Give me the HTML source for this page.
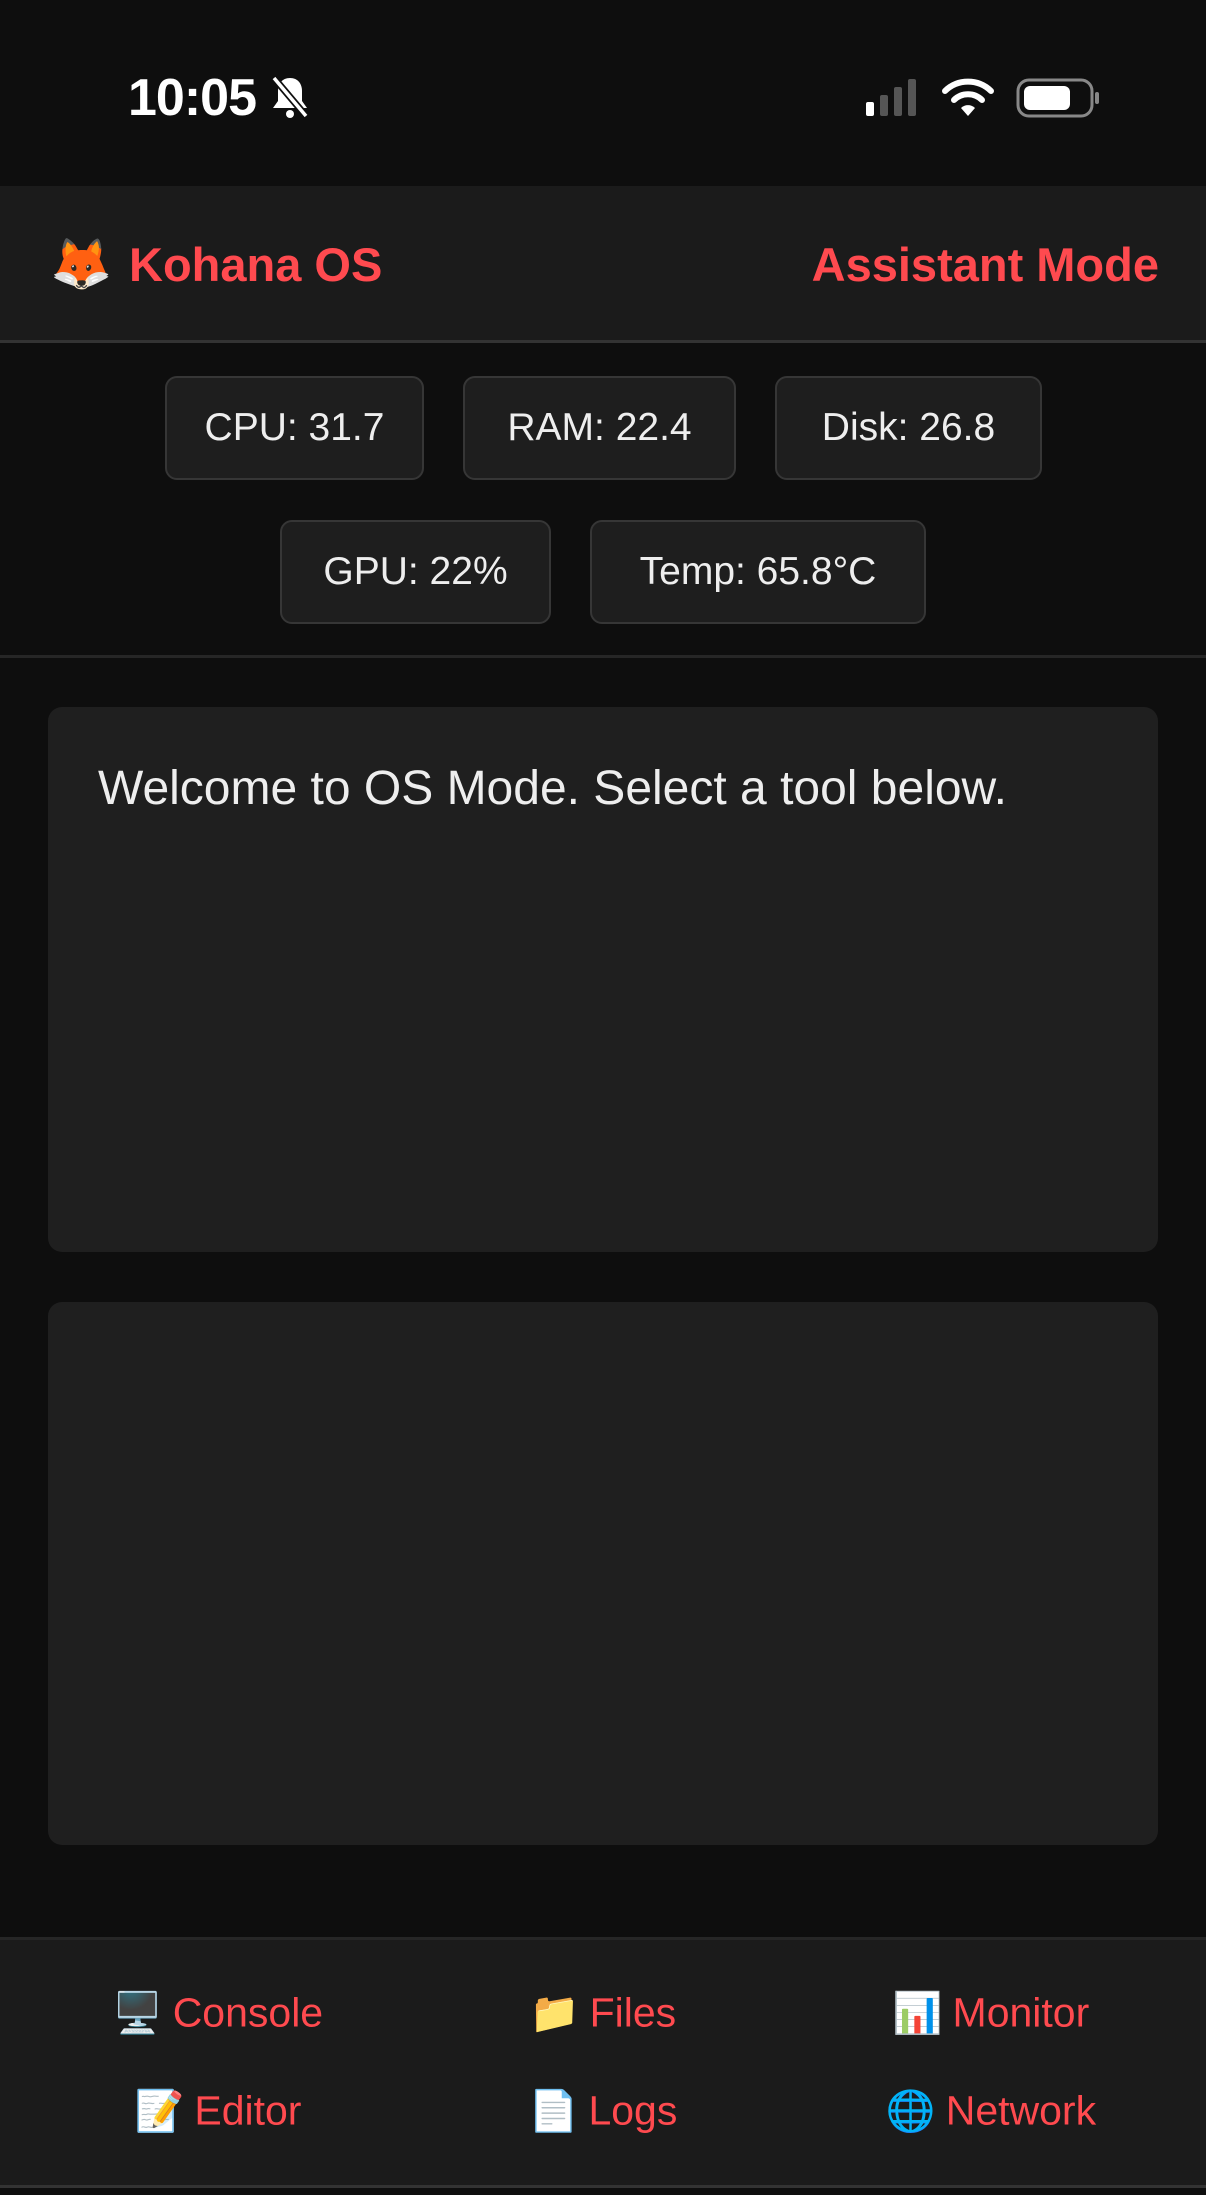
<!DOCTYPE html>
<html><head><meta charset="utf-8"><style>
*{margin:0;padding:0;box-sizing:border-box}
body{width:1206px;height:2195px;background:#0e0e0e;font-family:"Liberation Sans",sans-serif;position:relative;overflow:hidden;color:#eee}
.abs{position:absolute}
.status{left:0;top:0;width:1206px;height:186px;background:#0e0e0e}
.time{left:128px;top:68px;font-size:52px;font-weight:bold;color:#fff;letter-spacing:-1px}
.header{left:0;top:186px;width:1206px;height:157px;background:#1b1b1b;border-bottom:3px solid #333}
.red{color:#ff4a4f}
.chip{position:absolute;height:104px;background:#1e1e1e;border:2px solid #363636;border-radius:12px;font-size:39px;color:#eee;display:flex;align-items:center;justify-content:center}
.box{position:absolute;left:48px;width:1110px;background:#1f1f1f;border-radius:14px}
.nav{left:0;top:1937px;width:1206px;height:251px;background:#1b1b1b;border-top:3px solid #262626;border-bottom:3px solid #333}
.ni{position:absolute;font-size:41px;color:#ff4a4f;display:flex;align-items:center;gap:10px;transform:translate(-50%,-50%);white-space:nowrap}
.ic{font-size:40px;font-family:"Noto Color Emoji","DejaVu Sans",sans-serif}
</style></head><body>
<div class="abs status"></div>
<div class="abs time">10:05</div>
<svg class="abs" style="left:268px;top:74px" width="44" height="46" viewBox="0 0 44 46"><path d="M22 4c-8 0-12 6-12 13v10l-5 7h34l-5-7V17c0-7-4-13-12-13z" fill="#fff"/><circle cx="22" cy="40" r="4" fill="#fff"/><path d="M6 4l32 38" stroke="#0e0e0e" stroke-width="7"/><path d="M6 4l32 38" stroke="#fff" stroke-width="3.5"/></svg>
<svg class="abs" style="left:864px;top:78px" width="60" height="40"><rect x="2" y="24" width="8" height="14" rx="2" fill="#fff"/><rect x="16" y="17" width="8" height="21" rx="2" fill="#555"/><rect x="30" y="9" width="8" height="29" rx="2" fill="#555"/><rect x="44" y="1" width="8" height="37" rx="2" fill="#555"/></svg>
<svg class="abs" style="left:942px;top:78px" width="52" height="40" viewBox="0 0 52 40"><path d="M3 13a33 33 0 0 1 46 0" stroke="#fff" stroke-width="6" fill="none" stroke-linecap="round"/><path d="M12 22a20 20 0 0 1 28 0" stroke="#fff" stroke-width="6" fill="none" stroke-linecap="round"/><path d="M19 30l7 8 7-8a10 10 0 0 0-14 0z" fill="#fff"/></svg>
<svg class="abs" style="left:1016px;top:78px" width="86" height="40"><rect x="2" y="2" width="74" height="36" rx="11" fill="none" stroke="#888" stroke-width="3"/><rect x="8" y="8" width="46" height="24" rx="6" fill="#fff"/><rect x="79" y="14" width="4" height="12" rx="2" fill="#888"/></svg>
<div class="abs header"></div>
<div class="abs" style="left:50px;top:236px;font-size:50px;font-family:'Noto Color Emoji',sans-serif">🦊</div>
<div class="abs red" style="left:129px;top:237px;font-size:47px;font-weight:bold">Kohana OS</div>
<div class="abs red" style="right:47px;top:237px;font-size:47px;font-weight:bold">Assistant Mode</div>
<div class="chip" style="left:165px;top:376px;width:259px">CPU: 31.7</div>
<div class="chip" style="left:463px;top:376px;width:273px">RAM: 22.4</div>
<div class="chip" style="left:775px;top:376px;width:267px">Disk: 26.8</div>
<div class="chip" style="left:280px;top:520px;width:271px">GPU: 22%</div>
<div class="chip" style="left:590px;top:520px;width:336px">Temp: 65.8°C</div>
<div class="abs" style="left:0;top:655px;width:1206px;height:3px;background:#262626"></div>
<div class="box" style="top:707px;height:545px"><div style="position:absolute;left:50px;top:54px;font-size:48px;color:#eee">Welcome to OS Mode. Select a tool below.</div></div>
<div class="box" style="top:1302px;height:543px"></div>
<div class="abs nav"></div>
<div class="ni" style="left:218px;top:2013px"><span class="ic">🖥️</span>Console</div>
<div class="ni" style="left:603px;top:2013px"><span class="ic">📁</span>Files</div>
<div class="ni" style="left:991px;top:2013px"><span class="ic">📊</span>Monitor</div>
<div class="ni" style="left:218px;top:2111px"><span class="ic">📝</span>Editor</div>
<div class="ni" style="left:603px;top:2111px"><span class="ic">📄</span>Logs</div>
<div class="ni" style="left:991px;top:2111px"><span class="ic">🌐</span>Network</div>
</body></html>
